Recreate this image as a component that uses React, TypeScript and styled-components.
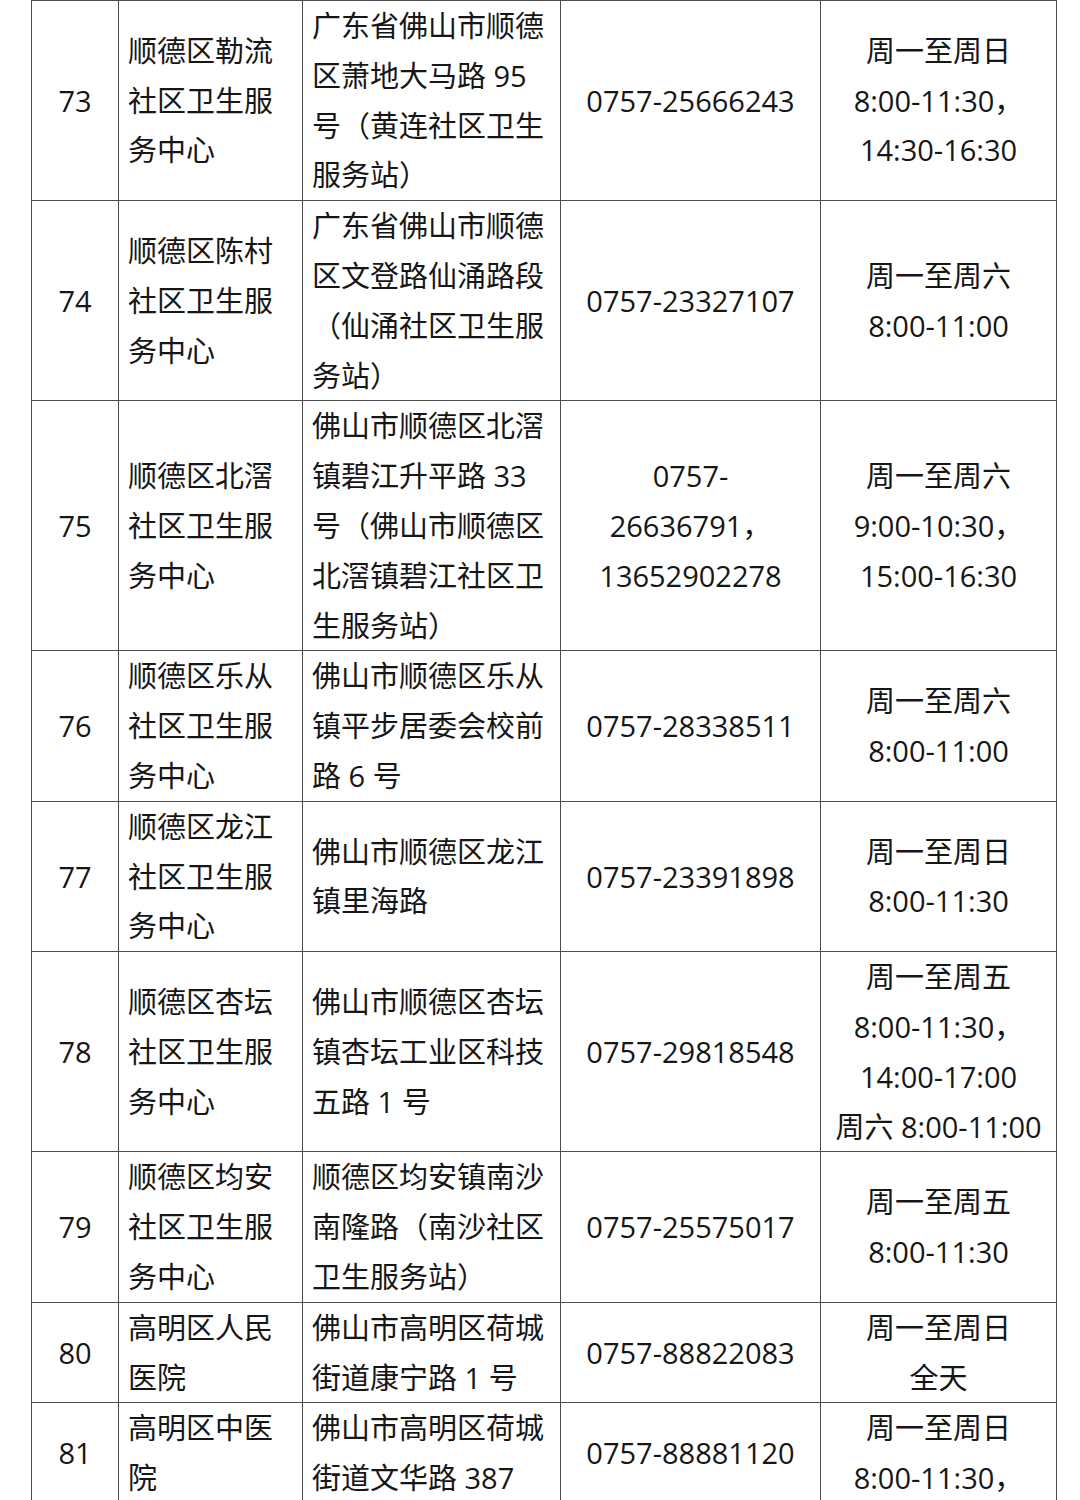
import React from "react";
import styled, { createGlobalStyle } from "styled-components";

const GlobalStyle = createGlobalStyle`
  html, body {
    margin: 0;
    padding: 0;
    background: #ffffff;
  }
  body {
    font-family: "Open Sans", "Noto Sans CJK SC", sans-serif;
    color: #161616;
  }
`;

type Entry = {
  no: string;
  name: string[];
  address: string[];
  phone: string[];
  hours: string[];
};

const rows: Entry[] = [
  {
    no: "73",
    name: ["顺德区勒流", "社区卫生服", "务中心"],
    address: ["广东省佛山市顺德", "区萧地大马路 95", "号（黄连社区卫生", "服务站）"],
    phone: ["0757-25666243"],
    hours: ["周一至周日", "8:00-11:30，", "14:30-16:30"],
  },
  {
    no: "74",
    name: ["顺德区陈村", "社区卫生服", "务中心"],
    address: ["广东省佛山市顺德", "区文登路仙涌路段", "（仙涌社区卫生服", "务站）"],
    phone: ["0757-23327107"],
    hours: ["周一至周六", "8:00-11:00"],
  },
  {
    no: "75",
    name: ["顺德区北滘", "社区卫生服", "务中心"],
    address: ["佛山市顺德区北滘", "镇碧江升平路 33", "号（佛山市顺德区", "北滘镇碧江社区卫", "生服务站）"],
    phone: ["0757-", "26636791，", "13652902278"],
    hours: ["周一至周六", "9:00-10:30，", "15:00-16:30"],
  },
  {
    no: "76",
    name: ["顺德区乐从", "社区卫生服", "务中心"],
    address: ["佛山市顺德区乐从", "镇平步居委会校前", "路 6 号"],
    phone: ["0757-28338511"],
    hours: ["周一至周六", "8:00-11:00"],
  },
  {
    no: "77",
    name: ["顺德区龙江", "社区卫生服", "务中心"],
    address: ["佛山市顺德区龙江", "镇里海路"],
    phone: ["0757-23391898"],
    hours: ["周一至周日", "8:00-11:30"],
  },
  {
    no: "78",
    name: ["顺德区杏坛", "社区卫生服", "务中心"],
    address: ["佛山市顺德区杏坛", "镇杏坛工业区科技", "五路 1 号"],
    phone: ["0757-29818548"],
    hours: ["周一至周五", "8:00-11:30，", "14:00-17:00", "周六 8:00-11:00"],
  },
  {
    no: "79",
    name: ["顺德区均安", "社区卫生服", "务中心"],
    address: ["顺德区均安镇南沙", "南隆路（南沙社区", "卫生服务站）"],
    phone: ["0757-25575017"],
    hours: ["周一至周五", "8:00-11:30"],
  },
  {
    no: "80",
    name: ["高明区人民", "医院"],
    address: ["佛山市高明区荷城", "街道康宁路 1 号"],
    phone: ["0757-88822083"],
    hours: ["周一至周日", "全天"],
  },
  {
    no: "81",
    name: ["高明区中医", "院"],
    address: ["佛山市高明区荷城", "街道文华路 387", "号"],
    phone: ["0757-88881120"],
    hours: ["周一至周日", "8:00-11:30，", "14:30-17:00"],
  },
];

const Page = styled.div`
  height: 1500px;
  overflow: hidden;
  padding-left: 31px;
`;

const Table = styled.table`
  border-collapse: collapse;
  table-layout: fixed;
  width: 1025px;
  font-size: 29px;
  line-height: 49.8px;
`;

const Col = styled.col<{ $w: number }>`
  width: ${(p) => p.$w}px;
`;

const Row = styled.tr<{ $split?: boolean }>`
  vertical-align: ${(p) => (p.$split ? "top" : "middle")};
`;

const Cell = styled.td<{ $align: "left" | "center"; $drop?: boolean }>`
  border: 1px solid #4d4d4d;
  padding: ${(p) => (p.$drop ? "24.9px" : "0")} 9px 0 9px;
  text-align: ${(p) => p.$align};
  color: #161616;
`;

const Line = styled.span`
  display: block;
  white-space: nowrap;
`;

const Lines: React.FC<{ items: string[] }> = ({ items }) => (
  <>
    {items.map((t, i) => (
      <Line key={i}>{t}</Line>
    ))}
  </>
);

export default function App() {
  return (
    <>
      <GlobalStyle />
      <Page>
        <Table>
          <colgroup>
            <Col $w={87} />
            <Col $w={184} />
            <Col $w={258} />
            <Col $w={260} />
            <Col $w={236} />
          </colgroup>
          <tbody>
            {rows.map((r, idx) => {
              const split = idx === rows.length - 1;
              return (
                <Row key={r.no} $split={split}>
                  <Cell $align="center" $drop={split}>
                    <Lines items={[r.no]} />
                  </Cell>
                  <Cell $align="left">
                    <Lines items={r.name} />
                  </Cell>
                  <Cell $align="left">
                    <Lines items={r.address} />
                  </Cell>
                  <Cell $align="center" $drop={split}>
                    <Lines items={r.phone} />
                  </Cell>
                  <Cell $align="center">
                    <Lines items={r.hours} />
                  </Cell>
                </Row>
              );
            })}
          </tbody>
        </Table>
      </Page>
    </>
  );
}
